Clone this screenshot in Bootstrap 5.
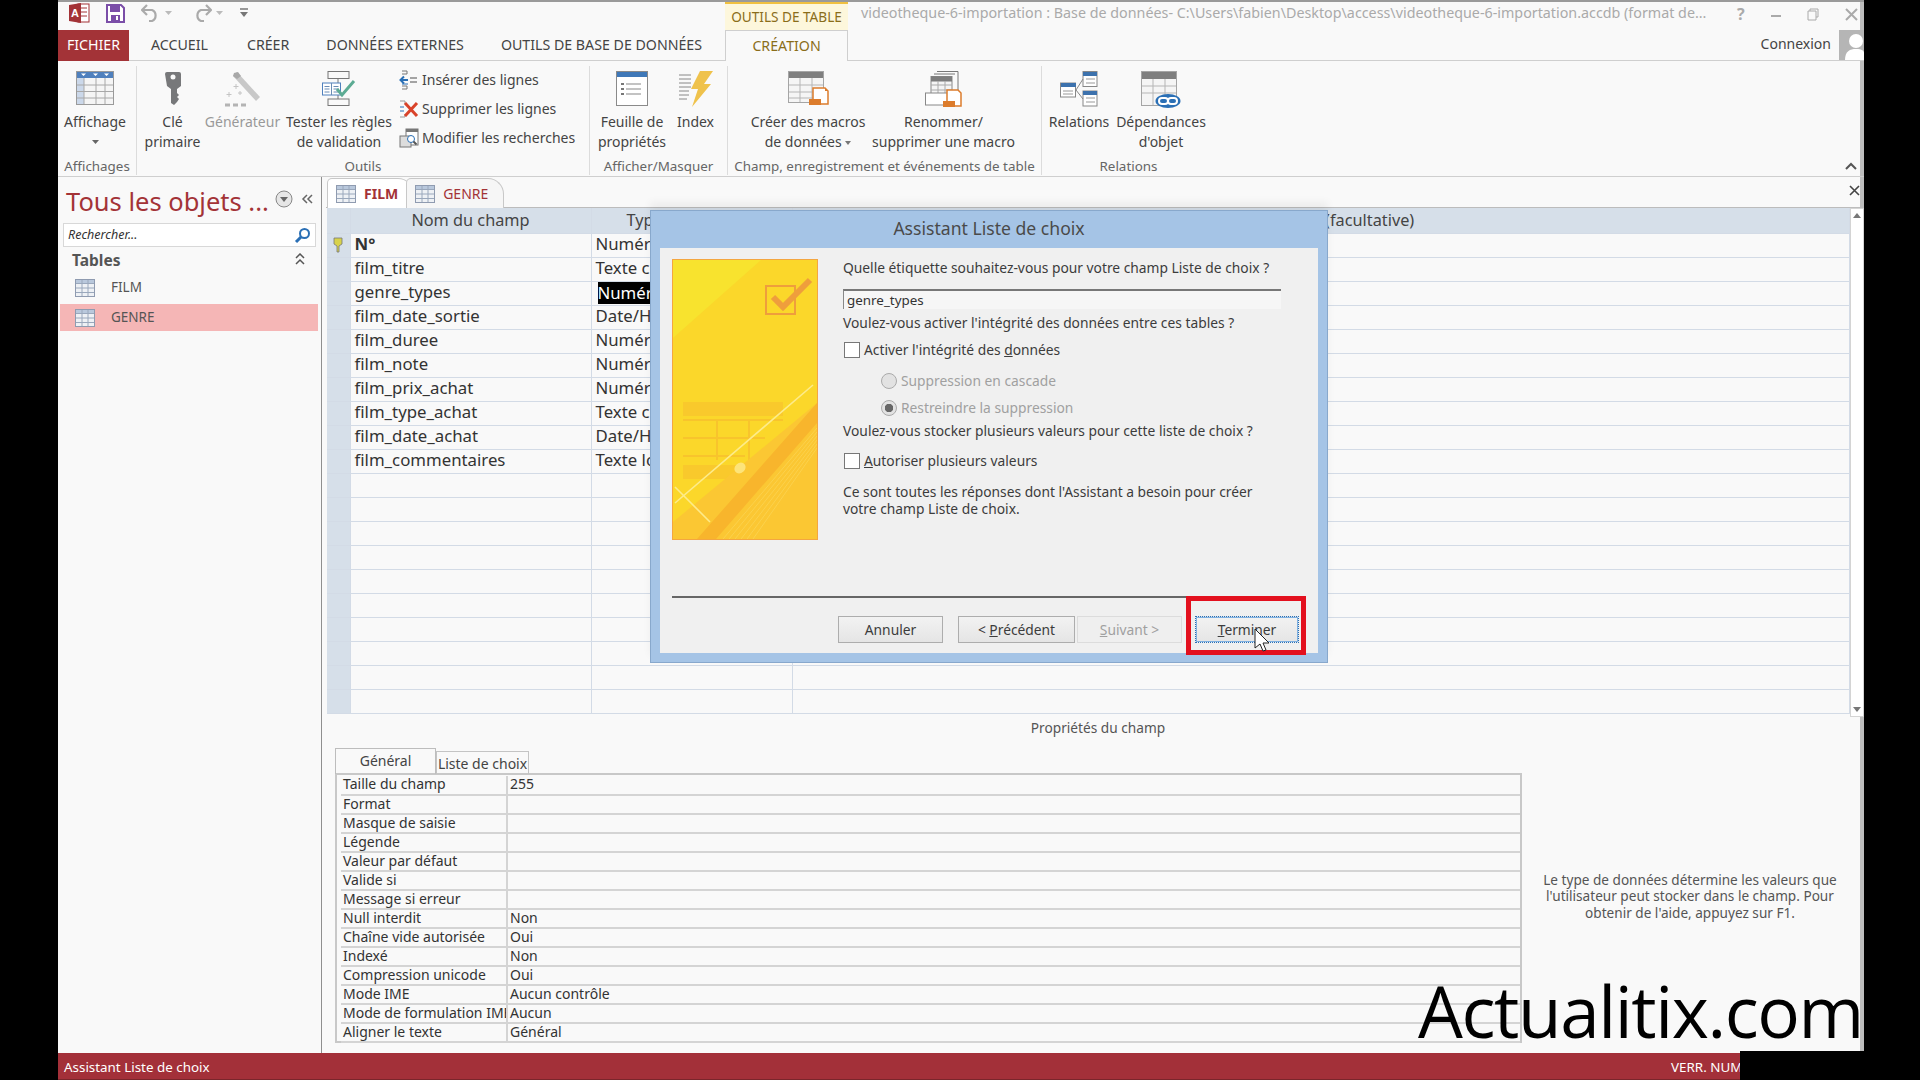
<!DOCTYPE html>
<html lang="fr">
<head>
  <meta charset="UTF-8" />
  <meta name="viewport" content="width=device-width, initial-scale=1.0"/>
  <title>Assistant Liste de choix</title>
  <link href="https://cdn.jsdelivr.net/npm/bootstrap@5.3.0/dist/css/bootstrap.min.css" rel="stylesheet">
  <style>
    html, body { height: 100%; }
    body { background: #000; width: 1920px; height: 1080px; overflow: hidden; position: relative; font-family: "Noto Sans", "Liberation Sans", sans-serif; font-size: 14px; color: #444; }
    svg { display: block; flex: none; }
    #app { width: 1806px; height: 1080px; margin-left: 58px; background: #f9f9f9; box-shadow: inset -4px 0 0 #bdbdbd; }

    .titlebar { height: 30px; border-top: 2px solid #9a9a9a; }
    .qat { padding-left: 10px; width: 667px; }
    .ctx-title { width: 123px; height: 28px; background: #fdf7dc; border-top: 2px solid #f0c040; color: #8a6d1a; font-size: 13.6px; line-height: 25px; text-align: center; }
    .doc-title { color: #aaa; font-size: 14.3px; margin-left: 13px; width: 854px; white-space: nowrap; }
    .winbtn { color: #aaa; gap: 26px; margin-left: 22px; }

    .tabbar { height: 31px; border-bottom: 1px solid #cfcfcf; font-size: 14.2px; }
    .tabbar .nav-link { color: #444; padding: 0; line-height: 30px; border: 0; border-radius: 0; }
    .tabbar .file { background: #a33337; color: #fff; width: 71px; text-align: center; height: 31px; }
    .tabbar .creation { width: 123px; height: 31px; text-align: center; color: #8a6d1a; background: #f9f9f9; border: 1px solid #cfcfcf; border-bottom: 0; }
    .t-acc { margin-left: 22px; } .t-cre { margin-left: 39px; } .t-don { margin-left: 37px; } .t-out { margin-left: 37px; } .t-cr2 { margin-left: 23px; }
    .connexion { color: #444; font-size: 14px; }
    .avatar { width: 25px; height: 30px; background: #b5b5b5; overflow: hidden; }

    .ribbon { height: 116px; border-bottom: 1px solid #cfcfcf; position: relative; }
    .rgroup { display: flex; flex-direction: column; border-right: 1px solid #dcdcdc; margin: 5px 0 1px; }
    .rgroup .items { display: flex; height: 92px; }
    .rgroup .glabel { color: #666; font-size: 13.4px; line-height: 18px; text-align: center; white-space: nowrap; }
    .rbtn { display: flex; flex-direction: column; align-items: center; font-size: 14px; line-height: 20px; text-align: center; padding-top: 5px; flex: none; white-space: nowrap; }
    .rbtn .ic { height: 41px; }
    .rbtn.off { color: #999; }
    .g1 { width: 79px; } .g2 { width: 453px; } .g3 { width: 138px; } .g4 { width: 314px; } .g5 { width: 173px; }
    .b-cle { width: 65px; margin-left: 3px; } .b-gen { width: 75px; } .b-test { width: 112px; margin-left: 3px; }
    .b-feuille { width: 72px; margin-left: 6px; } .b-index { width: 47px; margin-left: 4px; }
    .b-macro { width: 114px; margin-left: 23px; } .b-ren { width: 143px; margin-left: 7px; }
    .b-rel { width: 62px; margin-left: 6px; } .b-dep { width: 94px; margin-left: 4px; }
    .collapse-up { right: 7px; bottom: 6px; }
    .small-list { margin: -1px 0 0 4px; font-size: 14px; }
    .small-list > div { height: 29px; display: flex; align-items: center; gap: 3px; white-space: nowrap; }

    .navpane { width: 264px; border-right: 1px solid #8f8f8f; padding-left: 2px; }
    .splitter { width: 4px; }
    .mainpane { width: 1538px; min-width: 0; }
    .nav-title { color: #a33337; font-size: 25.5px; line-height: 30px; padding: 9px 0 0 6px; white-space: nowrap; height: 46px; }
    .search { height: 24px; margin: 0 5px 0 3px; border: 1px solid #d8d8d8; background: #fff; font-style: italic; font-size: 12.5px; color: #333; }
    .nav-head { font-weight: 700; color: #555; font-size: 15.5px; padding: 2px 0 0 12px; height: 27px; }
    .nav-item-row { height: 27px; gap: 16px; padding-left: 15px; color: #555; font-size: 13.5px; margin-right: 3px; }
    .nav-item-row.sel { background: #f5b6b6; margin-top: 3px; }

    .doctabs { height: 31px; padding-left: 1px; border-bottom: 1px solid #bcbcbc; }
    .doctab { height: 30px; margin-top: 1px; padding: 0 15px 0 8px; gap: 8px; border: 1px solid #c8c8c8; border-bottom: 0; border-radius: 5px 16px 0 0; color: #a33337; font-size: 14px; }
    .doctab.on { font-weight: 700; background: #fff; }
    .doctab + .doctab { margin-left: -8px; font-weight: 400; background: #f6f6f6; }

    .design { height: 509px; margin-left: 1px; position: relative; }
    .design table { table-layout: fixed; width: 1523px; margin: 0; font-size: 16.8px; --bs-table-bg: transparent; }
    .design .c-sel { width: 23px; } .design .c-name { width: 241px; } .design .c-type { width: 201px; }
    .design th, .design td { height: 24px; padding: 0 4px 2px; border-bottom: 1px solid #d3dbe6; border-right: 1px solid #d3dbe6; line-height: 20px; vertical-align: middle; white-space: nowrap; overflow: hidden; color: #333; }
    .design th { height: 25px; padding-bottom: 0; background: #d6dfe9; font-size: 16.3px; font-weight: 400; text-align: center; color: #444; }
    .design th:last-child { padding-left: 10px; }
    .design td.sel { background: #d6dfe9; padding: 0; text-align: center; }
    .design .hl { background: #000; color: #fff; display: block; margin: 0 -4px -2px 2px; line-height: 22px; }
    .vscroll { width: 14px; border: 1px solid #d4d4d4; background: #fff; height: 509px; }

    .field-props { text-align: center; color: #555; font-size: 13.7px; line-height: 21px; width: 1544px; margin-bottom: 10px; }
    .props { width: 1187px; margin-left: 9px; flex: none; }
    .props .nav-tabs { border: 0; font-size: 14px; }
    .props .nav-link { padding: 0; border-radius: 0; color: #444; text-align: center; }
    .ptab-a { width: 101px; height: 26px; line-height: 23px; border: 1px solid #bdbdbd !important; border-bottom: 0 !important; background: #f9f9f9; position: relative; z-index: 1; }
    .ptab-b { width: 93px; height: 23px; margin-top: 3px; line-height: 24px; background: #eee; border: 1px solid #c4c4c4 !important; border-bottom: 0 !important; }
    .prop-panel { border: 2px solid #c8c8c8; padding: 1px 0 0 4px; height: 270px; }
    .prop-panel table { table-layout: fixed; width: 100%; margin: 0; font-size: 14px; --bs-table-bg: transparent; }
    .prop-panel .c-label { width: 166px; }
    .prop-panel td { height: 19px; padding: 0 2px; border-bottom: 2px solid #d4d4d4; line-height: 16px; white-space: nowrap; overflow: hidden; color: #333; }
    .prop-panel td:first-child { border-right: 2px solid #d4d4d4; padding-left: 2px; }
    .helptext { width: 296px; margin: 2px 0 0 20px; text-align: center; font-size: 13.6px; line-height: 16.4px; color: #555; }

    .statusbar { height: 27px; background: #a33039; color: #fff; font-size: 13.4px; padding: 3px 0 0 6px; border-bottom: 1px solid #7a252b; }
    .status-num { position: absolute; left: 1671px; bottom: 0; line-height: 25px; font-size: 13.4px; }
    .blackout { position: absolute; left: 1740px; top: 1051px; width: 180px; height: 29px; background: #000; }
    .watermark { position: absolute; left: 1418px; top: 963px; font-family: "Open Sans", "Noto Sans", sans-serif; font-size: 71px; line-height: 96px; color: #000; letter-spacing: -1.4px; white-space: nowrap; }

    /* assistant window */
    .wizard { position: absolute; left: 650px; top: 210px; width: 678px; height: 453px; background: #a5c4e6; border: 1px solid #88a8cc; border-radius: 0; box-shadow: 0 -8px 8px rgba(0,0,0,.05); }
    .wizard .card-header { height: 37px; padding: 0; background: transparent; border: 0; text-align: center; font-size: 17.6px; line-height: 34px; color: #4a4a4a; }
    .wizard .card-body { margin: 0 9px 9px; padding: 11px 0 10px 12px; background: #f0f0f0; display: flex; flex-direction: column; font-size: 13.8px; line-height: 18px; color: #3c3c3c; }
    .wiz-art { width: 146px; height: 281px; flex: none; border: 1px solid #f4a640; background: #fbd72a; }
    .wiz-form { margin-left: 25px; width: 438px; }
    .wiz-input { height: 20px; border: 0; border-top: 2px solid #777; border-left: 1px solid #888; border-radius: 0; background: #f6f6f6; padding: 0 3px; font-size: 13.4px; line-height: 18px; color: #333; margin-top: 12px; box-shadow: none; }
    .form-check-input.box { width: 16px; height: 16px; margin: 0 4px 0 1px; border: 1px solid #777; border-radius: 0; background-color: #fff; flex: none; }
    .form-check-input.rad { width: 16px; height: 16px; margin: 0 4px 0 0; border: 1px solid #aaa; background-color: #e2e2e2; flex: none; opacity: 1; }
    .form-check-input.rad:checked { background-image: radial-gradient(circle, #666 0 4px, transparent 4.5px); border-color: #aaa; background-color: #e2e2e2; }
    .optrow { display: flex; align-items: center; height: 18px; }
    .optrow.dim { color: #a0a0a0; margin-left: 38px; }
    .opt-q { margin-top: 5px; }
    .opt-a { margin-top: 9px; } .opt-b { margin-top: 13px; } .opt-c { margin-top: 9px; }
    .opt-d { margin-top: 5px; } .opt-e { margin-top: 12px; } .opt-f { margin-top: 14px; line-height: 16.5px; }
    .wiz-rule { height: 0; border-top: 2px solid #666; margin: auto 18px 18px 0; }
    .wiz-btn { height: 27px; padding: 0; border: 1px solid #adadad; border-radius: 0; background: linear-gradient(#f2f2f2, #e5e5e5); font-size: 13.8px; line-height: 24px; color: #3c3c3c; }
    .wiz-btn:disabled { color: #a0a0a0; opacity: 1; background: #efefef; border-color: #dcdcdc; }
    .wiz-btn.def { border: 1px dotted #2a6fb5; box-shadow: inset 0 0 0 1px #7fb0e0; }
    .b1 { width: 105px; margin-right: 15px; } .b2 { width: 117px; margin-right: 2px; } .b3 { width: 105px; margin-right: 13px; } .b4 { width: 104px; margin-right: 19px; }
    .redbox { position: absolute; left: 535px; top: 385px; width: 120px; height: 59px; border: 5px solid #e3101e; }
    .cursor { position: absolute; left: 603px; top: 417px; }
  </style>
</head>
<body>
  <svg width="0" height="0" class="position-absolute">
    <symbol id="tbl" viewBox="0 0 20 18">
      <rect x=".5" y=".5" width="19" height="17" fill="#eef1f5" stroke="#8f9bb0"/>
      <rect x="1" y="1" width="18" height="3.5" fill="#b9c8dc"/>
      <path d="M1 4.500h18M1 9h18M1 13.500h18M7 1v16M13 1v16" stroke="#9aa8bc" fill="none"/>
    </symbol>
    <symbol id="macro-table" viewBox="0 0 41 34">
      <rect x=".5" y=".5" width="35" height="31" fill="#f5f5f5" stroke="#a5a5a5"/>
      <rect x="1" y="1" width="34" height="6" fill="#7f7f7f"/>
      <path d="M1 14h34M1 21h34M1 27h34M12 7v24M24 7v24" stroke="#b5b5b5" fill="none"/>
      <path d="M25 17h12l3 3v13H25z" fill="#fff" stroke="#dc7c2c" stroke-width="1.500"/>
      <path d="M37 17l3 3h-3z" fill="#dc7c2c"/>
      <rect x="21" y="28" width="12" height="6" fill="#dc7c2c"/>
    </symbol>
  </svg>

  <div id="app" class="d-flex flex-column">
    <!-- title bar -->
    <div class="titlebar d-flex align-items-start">
      <div class="qat d-flex align-items-center gap-3">
        <svg width="22" height="22" viewBox="0 0 22 22"><rect x="10" y="2" width="11" height="18" fill="#fff" stroke="#a33337"/><path d="M12 6h7M12 10h7M12 14h7" stroke="#a33337"/><path d="M1 3l12-2v20L1 19z" fill="#a33337"/><text x="3" y="15" font-size="11" font-weight="700" fill="#fff" font-family="Liberation Sans">A</text></svg>
        <svg width="19" height="19" viewBox="0 0 19 19"><path d="M1 1h14l3 3v14H1z" fill="#fff" stroke="#7b4ea8" stroke-width="2"/><rect x="4" y="2" width="10" height="6" fill="#7b4ea8"/><rect x="5" y="11" width="9" height="7" fill="#7b4ea8"/><rect x="10" y="12" width="2" height="4" fill="#fff"/></svg>
        <div class="d-flex align-items-center gap-1">
          <svg width="20" height="18" viewBox="0 0 20 18"><path d="M6 1L1 6l5 5M2 6h9a6 6 0 0 1 0 11H8" fill="none" stroke="#aaa" stroke-width="2.200"/></svg>
          <svg width="7" height="4" viewBox="0 0 7 4"><path d="M0 0h7L3.500 4z" fill="#bbb"/></svg>
        </div>
        <div class="d-flex align-items-center gap-1 ms-1">
          <svg width="20" height="18" viewBox="0 0 20 18"><path d="M14 1l5 5-5 5M18 6H9a6 6 0 0 0 0 11h3" fill="none" stroke="#aaa" stroke-width="2.200"/></svg>
          <svg width="7" height="4" viewBox="0 0 7 4"><path d="M0 0h7L3.500 4z" fill="#bbb"/></svg>
        </div>
        <svg width="10" height="10" viewBox="0 0 10 10"><path d="M1 1h8" stroke="#777" stroke-width="1.500"/><path d="M1 4h8L5 9z" fill="#777"/></svg>
      </div>
      <div class="ctx-title">OUTILS DE TABLE</div>
      <div class="doc-title">videotheque-6-importation : Base de données- C:\Users\fabien\Desktop\access\videotheque-6-importation.accdb (format de...</div>
      <div class="winbtn d-flex align-items-center">
        <span class="fw-bold fs-6">?</span>
        <svg width="10" height="12" viewBox="0 0 10 12"><path d="M0 8h10" stroke="#aaa" stroke-width="2"/></svg>
        <svg width="12" height="13" viewBox="0 0 12 13"><path d="M3 3V1h8v8H9M1 3h8v9H1z" fill="none" stroke="#aaa"/></svg>
        <svg width="13" height="13" viewBox="0 0 13 13"><path d="M1 1l11 11M12 1L1 12" stroke="#aaa" stroke-width="2"/></svg>
      </div>
    </div>

    <!-- ribbon tabs -->
    <div class="tabbar d-flex align-items-start">
      <nav class="nav flex-nowrap">
        <a class="nav-link file">FICHIER</a>
        <a class="nav-link t-acc">ACCUEIL</a>
        <a class="nav-link t-cre">CRÉER</a>
        <a class="nav-link t-don">DONNÉES EXTERNES</a>
        <a class="nav-link t-out">OUTILS DE BASE DE DONNÉES</a>
        <a class="nav-link creation t-cr2">CRÉATION</a>
      </nav>
      <div class="ms-auto d-flex align-items-start">
        <span class="connexion me-2 lh-lg">Connexion</span>
        <span class="avatar"><svg width="25" height="30" viewBox="0 0 25 30"><circle cx="17" cy="11" r="7" fill="#fff"/><path d="M6 30c0-9 5-11 11-11s8 2 8 4v7z" fill="#fff"/></svg></span>
      </div>
    </div>

    <!-- ribbon -->
    <div class="ribbon d-flex">
      <div class="rgroup g1">
        <div class="items pe-1">
          <div class="rbtn flex-grow-1">
            <span class="ic"><svg width="38" height="34" viewBox="0 0 38 34"><rect x=".5" y=".5" width="37" height="33" fill="#f5f5f5" stroke="#9a9a9a"/><rect x="1" y="1" width="36" height="6" fill="#4f80bd"/><rect x="1" y="7" width="7" height="26" fill="#cbd8ea"/><path d="M5 2.500h5L7.500 5zM17 2.500h5L19.500 5zM28 2.500h5L30.500 5z" fill="#fff"/><path d="M1 14h36M1 20.500h36M1 27h36M8 7v26M20 7v26M29 7v26" stroke="#a8a8a8" fill="none"/></svg></span>
            Affichage
            <svg class="mt-2" width="7" height="4" viewBox="0 0 7 4"><path d="M0 0h7L3.500 4z" fill="#666"/></svg>
          </div>
        </div>
        <div class="glabel">Affichages</div>
      </div>
      <div class="rgroup g2">
        <div class="items">
          <div class="rbtn b-cle">
            <span class="ic"><svg width="18" height="36" viewBox="0 0 18 36"><path d="M1 3a2 2 0 0 1 2-2h12a2 2 0 0 1 2 2v12l-4 3v4l2 2-2 2 2 2-2 3-3 3-3-2V18l-4-3z" fill="#77787a"/><circle cx="9" cy="6" r="2.500" fill="#f9f9f9"/></svg></span>
            Clé<br>primaire
          </div>
          <div class="rbtn b-gen off">
            <span class="ic"><svg width="37" height="37" viewBox="0 0 37 37"><path d="M13 1l23 25-4 4L9 5z" fill="#c8c8c8"/><path d="M10 2l4-1 3 4-4 3-4-3z" fill="#a8a8a8"/><path d="M12 13v5M9.500 15.500h5M5 21v5M2.500 23.500h5M16 20v4M14 22h4" stroke="#c4c4c4"/><path d="M1 34h5M9 34h5M17 34h5" stroke="#b4b4b4" stroke-width="3"/></svg></span>
            Générateur
          </div>
          <div class="rbtn b-test">
            <span class="ic"><svg width="34" height="35" viewBox="0 0 34 35"><g fill="#f9f9f9" stroke="#777"><rect x="6" y=".5" width="21" height="7"/><rect x="6" y="28" width="21" height="6.500"/></g><path d="M16 8v4M16 24v4" stroke="#777"/><rect x=".5" y="12" width="18" height="12" fill="#fff" stroke="#4f80bd"/><path d="M9.500 12v12M2.500 15.500h5M2.500 18h5M2.500 21h5M11.500 15.500h5M11.500 18h5M11.500 21h5" stroke="#6a8cb5"/><path d="M15 18l5 6 12-14" fill="none" stroke="#5cab93" stroke-width="3"/></svg></span>
            Tester les règles<br>de validation
          </div>
          <div class="small-list">
            <div><svg width="20" height="20" viewBox="0 0 20 20"><path d="M3 1h5v3H3M3 16h5v3H3" fill="none" stroke="#777"/><path d="M9 10H2M5 6.500L1.500 10 5 13.500" stroke="#2a6fb5" stroke-width="2" fill="none"/><path d="M3 14h6" stroke="#2a6fb5"/><path d="M11 8h7M11 12h7" stroke="#888" stroke-width="1.500"/></svg>Insérer des lignes</div>
            <div><svg width="20" height="20" viewBox="0 0 20 20"><path d="M1 2h5v3M1 18h5v-3" fill="none" stroke="#999"/><path d="M1 8h4M1 12h4" stroke="#2a6fb5"/><path d="M6 4l12 13M18 4L6 17" stroke="#d9432a" stroke-width="3"/></svg>Supprimer les lignes</div>
            <div><svg width="20" height="20" viewBox="0 0 20 20"><rect x="7" y="1" width="12" height="16" fill="#fff" stroke="#777"/><rect x="7" y="1" width="12" height="3" fill="#777"/><rect x="1" y="8" width="11" height="11" fill="#ddd" stroke="#777"/><circle cx="12" cy="11" r="3.500" fill="#fff" stroke="#2a6fb5"/><path d="M14.500 13.500l3 3" stroke="#555" stroke-width="2"/></svg>Modifier les recherches</div>
          </div>
        </div>
        <div class="glabel">Outils</div>
      </div>
      <div class="rgroup g3">
        <div class="items">
          <div class="rbtn b-feuille">
            <span class="ic"><svg width="32" height="35" viewBox="0 0 32 35"><rect x=".5" y=".5" width="31" height="34" fill="#fff" stroke="#8a8a8a"/><rect x="1" y="1" width="30" height="5" fill="#3f78b8"/><path d="M10 13h15M10 18h15M10 23h15" stroke="#888" stroke-width="1.200"/><path d="M5 13h3M5 18h3M5 23h3" stroke="#777" stroke-width="2"/></svg></span>
            Feuille de<br>propriétés
          </div>
          <div class="rbtn b-index">
            <span class="ic"><svg width="35" height="36" viewBox="0 0 35 36"><path d="M1 4h12M1 8h12M1 12h12M1 16h12M1 20h10M1 24h10M1 28h8" stroke="#888"/><path d="M22 0h13l-9 13h7L14 36l6-18h-7z" fill="#efc24c"/></svg></span>
            Index
          </div>
        </div>
        <div class="glabel">Afficher/Masquer</div>
      </div>
      <div class="rgroup g4">
        <div class="items">
          <div class="rbtn b-macro">
            <span class="ic"><svg width="41" height="34"><use href="#macro-table"/></svg></span>
            <span>Créer des macros<br>de données <svg class="d-inline" width="6" height="4" viewBox="0 0 6 4"><path d="M0 0h6L3 4z" fill="#777"/></svg></span>
          </div>
          <div class="rbtn b-ren">
            <span class="ic"><svg width="38" height="36" viewBox="0 0 38 36"><path d="M12 .5h21v20M9 3h21" fill="none" stroke="#777"/><rect x="6" y="5.500" width="21" height="18" fill="#f5f5f5" stroke="#888"/><rect x="6" y="5.500" width="21" height="5" fill="#7d7d7d"/><path d="M6 14h21M6 19h21M13 10v13M20 10v13" stroke="#aaa"/><rect x=".5" y="22" width="24" height="12" fill="#fff" stroke="#888"/><path d="M22 19h11l3 3v13H22z" fill="#fff" stroke="#dc7c2c" stroke-width="1.500"/><rect x="18" y="30" width="12" height="6" fill="#dc7c2c"/></svg></span>
            Renommer/<br>supprimer une macro
          </div>
        </div>
        <div class="glabel">Champ, enregistrement et événements de table</div>
      </div>
      <div class="rgroup g5 border-end-0">
        <div class="items">
          <div class="rbtn b-rel">
            <span class="ic"><svg width="38" height="36" viewBox="0 0 38 36"><g fill="#fff" stroke="#888"><rect x=".5" y="12" width="15" height="14"/><rect x="23" y=".5" width="14" height="15"/><rect x="23" y="20" width="14" height="15"/></g><g fill="#3d72ad"><rect x="1" y="12" width="15" height="4"/><rect x="23" y="1" width="14" height="4"/><rect x="23" y="20" width="14" height="4"/></g><path d="M16 19L23 8M16 19l7 9" fill="none" stroke="#888"/><path d="M3 20h10M3 23h10M26 8h9M26 12h9M26 27h9M26 31h9" stroke="#999"/></svg></span>
            Relations
          </div>
          <div class="rbtn b-dep">
            <span class="ic"><svg width="40" height="37" viewBox="0 0 40 37"><rect x=".5" y=".5" width="35" height="34" fill="#f5f5f5" stroke="#a5a5a5"/><rect x="1" y="1" width="34" height="7" fill="#7f7f7f"/><path d="M1 15h34M1 22h34M12 8v26M24 8v26" stroke="#b5b5b5" fill="none"/><ellipse cx="27" cy="30" rx="12.500" ry="7" fill="#2a6fb5"/><rect x="18" y="27" width="9" height="6" rx="3" fill="none" stroke="#fff" stroke-width="2"/><rect x="27" y="27" width="9" height="6" rx="3" fill="none" stroke="#fff" stroke-width="2"/></svg></span>
            Dépendances<br>d'objet
          </div>
        </div>
        <div class="glabel">Relations</div>
      </div>
      <svg class="position-absolute collapse-up" width="12" height="8" viewBox="0 0 12 8"><path d="M1 7l5-5 5 5" fill="none" stroke="#555" stroke-width="2"/></svg>
    </div>

    <!-- workspace -->
    <div class="d-flex flex-grow-1 overflow-hidden">
      <div class="navpane flex-shrink-0">
        <div class="nav-title d-flex align-items-start">
          <span class="flex-grow-1">Tous les objets ...</span>
          <svg class="mt-1" width="18" height="18" viewBox="0 0 18 18"><circle cx="9" cy="9" r="8" fill="#e6e6e6" stroke="#888"/><path d="M5 7h8l-4 5z" fill="#666"/></svg>
          <svg class="mt-2 ms-2 me-2" width="12" height="10" viewBox="0 0 12 10"><path d="M6 1L2 5l4 4M11 1L7 5l4 4" fill="none" stroke="#666" stroke-width="1.500"/></svg>
        </div>
        <div class="search d-flex align-items-center ps-1">
          <span class="flex-grow-1">Rechercher...</span>
          <svg class="me-1" width="17" height="17" viewBox="0 0 17 17"><circle cx="10.500" cy="6.500" r="4.500" fill="#fff" stroke="#2a6fb5" stroke-width="2"/><path d="M7 10l-5 5" stroke="#2a6fb5" stroke-width="3"/></svg>
        </div>
        <div class="nav-head d-flex justify-content-between pe-3">
          <span>Tables</span>
          <svg class="mt-1" width="10" height="12" viewBox="0 0 10 12"><path d="M1 5l4-4 4 4M1 11l4-4 4 4" fill="none" stroke="#555" stroke-width="1.500"/></svg>
        </div>
        <div class="nav-item-row d-flex align-items-center"><svg width="20" height="18"><use href="#tbl"/></svg>FILM</div>
        <div class="nav-item-row sel d-flex align-items-center"><svg width="20" height="18"><use href="#tbl"/></svg>GENRE</div>
      </div>
      <div class="splitter flex-shrink-0"></div>

      <div class="mainpane flex-shrink-0 d-flex flex-column">
        <div class="doctabs d-flex">
          <div class="doctab on d-flex align-items-center"><svg width="20" height="18"><use href="#tbl"/></svg>FILM</div>
          <div class="doctab d-flex align-items-center"><svg width="20" height="18"><use href="#tbl"/></svg>GENRE</div>
          <svg class="ms-auto me-1 mt-2" width="11" height="11" viewBox="0 0 11 11"><path d="M1 1l9 9M10 1l-9 9" stroke="#444" stroke-width="1.600"/></svg>
        </div>

        <div class="design d-flex">
          <div>
            <table class="table table-sm">
              <colgroup><col class="c-sel"><col class="c-name"><col class="c-type"><col></colgroup>
              <thead><tr><th></th><th>Nom du champ</th><th>Type de données</th><th>Description (facultative)</th></tr></thead>
              <tbody id="fieldRows"></tbody>
            </table>
          </div>
          <div class="vscroll d-flex flex-column justify-content-between">
            <svg width="12" height="14" viewBox="0 0 12 14"><path d="M2 9h8L6 4z" fill="#777"/></svg>
            <svg width="12" height="14" viewBox="0 0 12 14"><path d="M2 5h8l-4 5z" fill="#777"/></svg>
          </div>
        </div>

        <div class="field-props">Propriétés du champ</div>

        <div class="d-flex align-items-center">
          <div class="props">
            <div class="nav nav-tabs">
              <a class="nav-link ptab-a">Général</a>
              <a class="nav-link ptab-b">Liste de choix</a>
            </div>
            <div class="prop-panel">
              <table class="table table-sm">
                <colgroup><col class="c-label"><col></colgroup>
                <tbody id="propRows"></tbody>
              </table>
            </div>
          </div>
          <div class="helptext">Le type de données détermine les valeurs que l'utilisateur peut stocker dans le champ. Pour obtenir de l'aide, appuyez sur F1.</div>
        </div>
      </div>
    </div>

    <div class="statusbar d-flex align-items-center">Assistant Liste de choix</div>
  </div>

  <span class="status-num text-white">VERR. NUM</span>
  <div class="blackout"></div>
  <div class="watermark">Actualitix.com</div>

  <!-- assistant window -->
  <div class="card wizard">
    <div class="card-header">Assistant Liste de choix</div>
    <div class="card-body">
      <div class="d-flex">
        <div class="wiz-art">
          <svg width="144" height="279" viewBox="0 0 144 279">
            <path d="M0 0h88L0 78z" fill="#f8e32e"/>
            <g fill="#f9c92c"><rect x="10" y="142" width="100" height="14"/><rect x="10" y="205" width="72" height="14"/></g>
            <path d="M10 160h100M10 178h82M10 196h62M44 160v40M76 160v40" stroke="#f8c42c" stroke-width="2" fill="none"/>
            <path d="M0 279V262L144 143v136z" fill="#fbc733"/>
            <path d="M144 143L24 279h19l101-116z" fill="#f8b52c"/>
            <path d="M144 168L50 279M144 172L56 279M144 176L62 279M144 180L68 279M144 184L74 279M144 188L80 279" stroke="#fcd85a" stroke-width=".8" opacity=".8"/>
            <path d="M2 243L140 125M2 227l35 35" stroke="#fdeb8a" stroke-width="1.600" fill="none"/>
            <ellipse cx="67" cy="208" rx="6" ry="5" fill="#fde47a" transform="rotate(-40 67 208)"/>
            <rect x="93" y="26" width="29" height="28" fill="none" stroke="#ef9e3c" stroke-width="2"/>
            <path d="M100 37l10 10 27-27" fill="none" stroke="#ef9e3c" stroke-width="6"/>
          </svg>
        </div>
        <div class="wiz-form">
          <div>Quelle étiquette souhaitez-vous pour votre champ Liste de choix ?</div>
          <input class="form-control wiz-input" type="text" value="genre_types">
          <div class="opt-q">Voulez-vous activer l'intégrité des données entre ces tables ?</div>
          <label class="optrow opt-a"><input class="form-check-input box" type="checkbox"><span>Activer l'intégrité des <u>d</u>onnées</span></label>
          <label class="optrow dim opt-b"><input class="form-check-input rad" type="radio" name="cascade" disabled>Suppression en cascade</label>
          <label class="optrow dim opt-c"><input class="form-check-input rad" type="radio" name="cascade" checked disabled>Restreindre la suppression</label>
          <div class="opt-d">Voulez-vous stocker plusieurs valeurs pour cette liste de choix ?</div>
          <label class="optrow opt-e"><input class="form-check-input box" type="checkbox"><span><u>A</u>utoriser plusieurs valeurs</span></label>
          <div class="opt-f">Ce sont toutes les réponses dont l'Assistant a besoin pour créer votre champ Liste de choix.</div>
        </div>
      </div>
      <div class="wiz-rule"></div>
      <div class="d-flex justify-content-end">
        <button class="btn wiz-btn b1">Annuler</button>
        <button class="btn wiz-btn b2">&lt; <u>P</u>récédent</button>
        <button class="btn wiz-btn b3" disabled><u>S</u>uivant &gt;</button>
        <button class="btn wiz-btn def b4"><u>T</u>erminer</button>
      </div>
    </div>
    <div class="redbox"></div>
    <svg class="cursor" width="17" height="25" viewBox="0 0 17 25"><path d="M1 1v19l5-4 3 7 3-1-3-7h6z" fill="#fff" stroke="#222"/></svg>
  </div>

  <script src="https://cdn.jsdelivr.net/npm/bootstrap@5.3.0/dist/js/bootstrap.bundle.min.js"></script>
  <script>
    // Design grid rows
    const fields = [
      ['N°', 'Numérique'], ['film_titre', 'Texte court'], ['genre_types', 'Numérique'],
      ['film_date_sortie', 'Date/Heure'], ['film_duree', 'Numérique'], ['film_note', 'Numérique'],
      ['film_prix_achat', 'Numérique'], ['film_type_achat', 'Texte court'], ['film_date_achat', 'Date/Heure'],
      ['film_commentaires', 'Texte long']
    ];
    const key = '<svg class="mx-auto" width="10" height="16" viewBox="0 0 10 16"><path d="M1 1h8v6L6 9v6H4V9L1 7z" fill="#d8d24a" stroke="#777" stroke-width=".8"/></svg>';
    let rows = '';
    for (let i = 0; i < 20; i++) {
      const f = fields[i] || ['', ''];
      const name = i === 0 ? `<b>${f[0]}</b>` : f[0];
      const type = i === 2 ? `<span class="hl">${f[1]}</span>` : f[1];
      rows += `<tr><td class="sel">${i === 0 ? key : ''}</td><td>${name}</td><td>${type}</td><td></td></tr>`;
    }
    document.getElementById('fieldRows').innerHTML = rows;

    // Field properties
    const props = [
      ['Taille du champ', '255'], ['Format', ''], ['Masque de saisie', ''], ['Légende', ''],
      ['Valeur par défaut', ''], ['Valide si', ''], ['Message si erreur', ''], ['Null interdit', 'Non'],
      ['Chaîne vide autorisée', 'Oui'], ['Indexé', 'Non'], ['Compression unicode', 'Oui'],
      ['Mode IME', 'Aucun contrôle'], ['Mode de formulation IME', 'Aucun'], ['Aligner le texte', 'Général']
    ];
    document.getElementById('propRows').innerHTML = props.map(p => `<tr><td>${p[0]}</td><td>${p[1]}</td></tr>`).join('');
  </script>
</body>
</html>
